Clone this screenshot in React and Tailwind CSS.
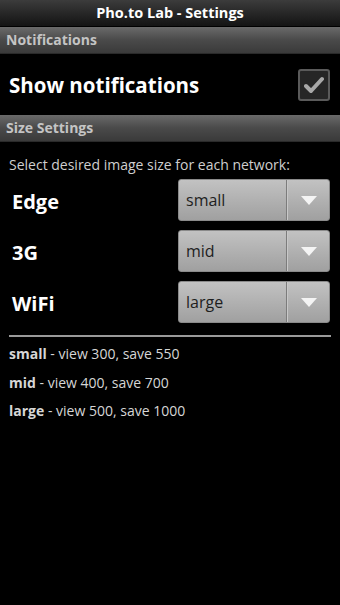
import React from 'react';

const font = { fontFamily: '"Open Sans", "Noto Sans", sans-serif' };

const SectionHeader = ({ title }) => (
    <div className="h-[27px] flex items-center px-[6px] bg-gradient-to-b from-[#6a6a6a] via-[#4a4a4a] to-[#3a3a3a] border-b border-[#2a2a2a]">
        <span className="text-[14px] font-bold text-[#c4c4c4] leading-none">{title}</span>
    </div>
);

const Spinner = ({ value }) => (
    <div className="w-[152px] h-[42px] rounded-[3px] flex bg-gradient-to-b from-[#c2c2c2] to-[#a0a0a0] border border-[#8a8a8a]">
        <div className="flex-1 flex items-center pl-[7px] text-[16px] text-[#1e1e1e]">{value}</div>
        <div className="w-[1px] bg-[#7c7c7c]" />
        <div className="w-[1px] bg-[#c8c8c8]" />
        <div className="w-[41px] flex items-center justify-center">
            <svg width="16" height="9" viewBox="0 0 16 9">
                <path d="M0 0 L16 0 L8 9 Z" fill="#f4f4f4" />
            </svg>
        </div>
    </div>
);

const NetworkRow = ({ label, value }) => (
    <div className="flex items-center justify-between h-[42px] pl-[12px] pr-[10px]">
        <span className="text-[20px] font-bold text-white pt-[3px]">{label}</span>
        <Spinner value={value} />
    </div>
);

const App = () => {
    const sizes = [
        { name: 'small', text: 'view 300, save 550' },
        { name: 'mid', text: 'view 400, save 700' },
        { name: 'large', text: 'view 500, save 1000' },
    ];

    return (
        <div className="w-[340px] h-[605px] bg-black overflow-hidden" style={font}>
            <div className="h-[27px] flex items-center justify-center bg-gradient-to-b from-[#3c3c3c] to-[#141414] border-b border-[#000]">
                <span className="text-[14.5px] font-bold text-white">Pho.to Lab - Settings</span>
            </div>

            <SectionHeader title="Notifications" />
            <div className="h-[61px] flex items-center justify-between pl-[9px] pr-[10px]">
                <span className="text-[20.5px] font-bold text-white pt-[2px]">Show notifications</span>
                <div className="w-[32px] h-[32px] rounded-[3px] border-2 border-[#5a5a5a] bg-[#262626] flex items-center justify-center">
                    <svg width="20" height="18" viewBox="0 0 20 18">
                        <path d="M2 10 L7 15 L18 3" fill="none" stroke="#a8a8a8" strokeWidth="4" strokeLinecap="round" strokeLinejoin="round" />
                    </svg>
                </div>
            </div>

            <SectionHeader title="Size Settings" />
            <div className="pt-[10px]">
                <div className="px-[9px] text-[14px] text-[#cfcfcf] h-[25px] flex items-center">
                    Select desired image size for each network:
                </div>
                <div className="flex flex-col gap-[9px] mt-[2px]">
                    <NetworkRow label="Edge" value="small" />
                    <NetworkRow label="3G" value="mid" />
                    <NetworkRow label="WiFi" value="large" />
                </div>
                <div className="mx-[9px] mt-[12px] h-[2px] bg-[#9a9a9a]" />
                <div className="flex flex-col px-[9px] pt-[3px] text-[14px] text-[#d6d6d6]">
                    {sizes.map((s) => (
                        <p key={s.name} className="h-[28.5px] leading-[28.5px]">
                            <span className="font-bold">{s.name}</span> - {s.text}
                        </p>
                    ))}
                </div>
            </div>
        </div>
    );
};

export default App;
